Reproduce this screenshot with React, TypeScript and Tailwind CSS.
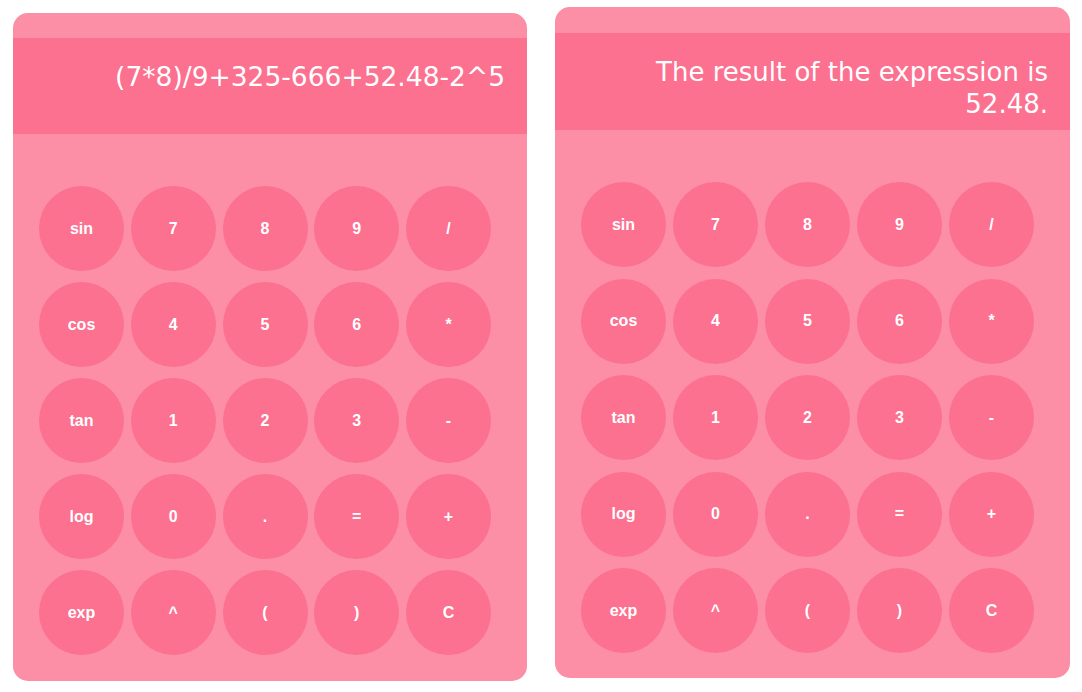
const keys = [
  "sin", "7", "8", "9", "/",
  "cos", "4", "5", "6", "*",
  "tan", "1", "2", "3", "-",
  "log", "0", ".", "=", "+",
  "exp", "^", "(", ")", "C",
];

function Calculator({ display, className, headerClass, gridClass }: { display: string; className: string; headerClass: string; gridClass: string }) {
  return (
    <div className={`rounded-[15px] bg-[#fc8ea6] ${className}`}>
      <div className={`bg-[#fc7090] pt-[23px] pr-[22px] pl-[40px] text-right leading-[32px] text-white font-['DejaVu_Sans',sans-serif] ${headerClass}`}>
        {display}
      </div>
      <div className={`mt-[52px] pl-[26px] grid grid-cols-[repeat(5,85px)] ${gridClass}`}>
        {keys.map((k) => (
          <button
            key={k}
            className="w-[85px] h-[85px] rounded-full bg-[#fc7090] text-white text-[16px] font-bold font-['Liberation_Sans',Arial,sans-serif] flex items-center justify-center"
          >
            {k}
          </button>
        ))}
      </div>
    </div>
  );
}

export default function App() {
  return (
    <div className="w-[1082px] h-[692px] bg-white flex items-start pl-[13px] gap-[28px]">
      <Calculator
        className="mt-[13px] w-[514px] pt-[25px] pb-[26px]"
        headerClass="h-[96px] text-[26.5px]"
        gridClass="gap-x-[6.75px] gap-y-[11px]"
        display="(7*8)/9+325-666+52.48-2^5"
      />
      <Calculator
        className="mt-[7px] w-[515px] pt-[26px] pb-[25px]"
        headerClass="h-[97px] text-[26px]"
        gridClass="gap-x-[7px] gap-y-[11.5px]"
        display="The result of the expression is 52.48."
      />
    </div>
  );
}
